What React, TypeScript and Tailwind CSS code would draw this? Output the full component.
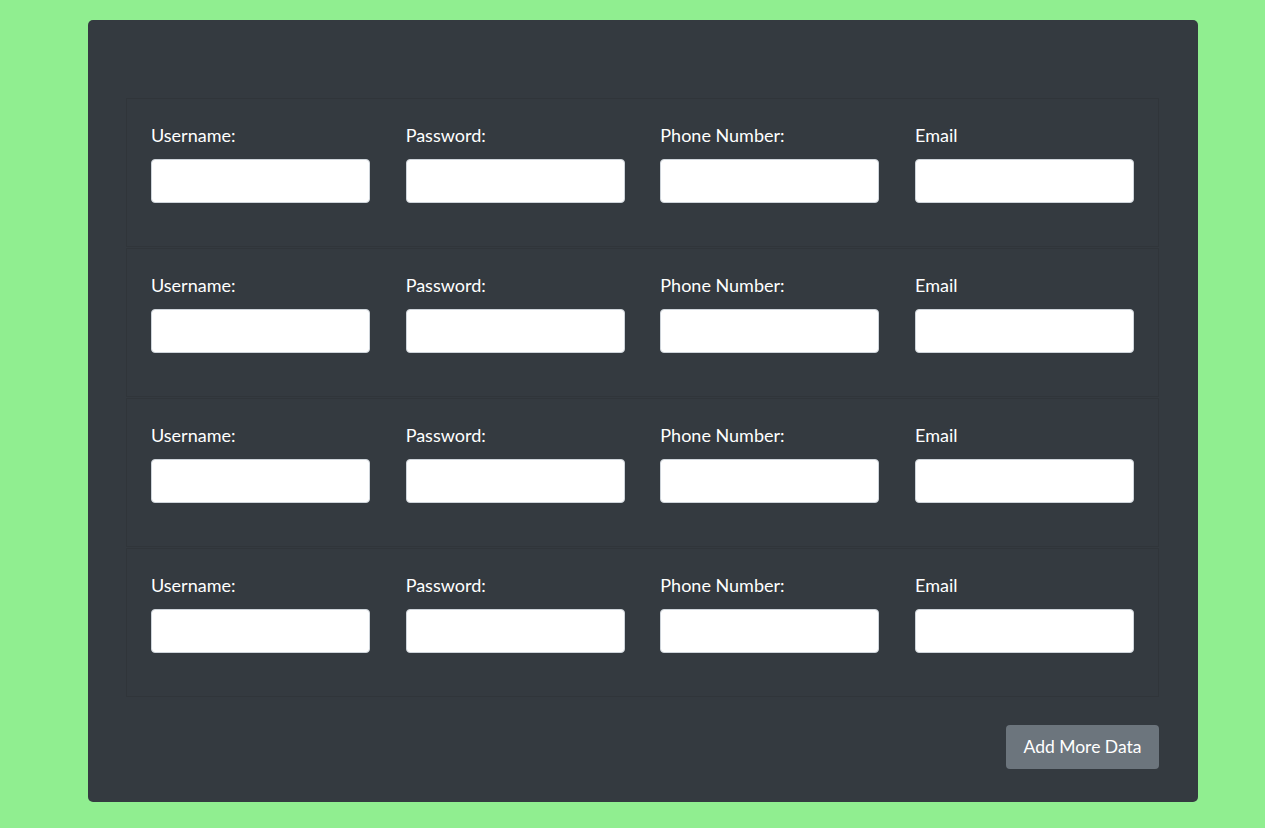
import React from "react";

const labels = ["Username:", "Password:", "Phone Number:", "Email"];

export default function App() {
  return (
    <div className="min-h-[828px] w-full bg-[#90ee90] pt-[20px]" style={{ fontFamily: "Lato, 'Noto Sans', sans-serif" }}>
      <div className="ml-[88px] flex h-[782px] w-[1110px] flex-col rounded-[5px] bg-[#343a40] pl-[38px] pr-[39px] pt-[78px]">
        <div className="flex flex-col gap-[1px]">
          {[0, 1, 2, 3].map((r) => (
            <div key={r} className="grid h-[149px] grid-cols-4 gap-x-[35.67px] border border-[#30353a] pl-[24px] pr-[24px] pt-[23px]">
              {labels.map((l) => (
                <div key={l} className="flex flex-col">
                  <label className="h-[26px] text-[18px] leading-[26px] text-white">{l}</label>
                  <input className="mt-[11px] h-[44px] w-full rounded-[4px] border border-[#ced4da] bg-white" />
                </div>
              ))}
            </div>
          ))}
        </div>
        <div className="mt-[28px] flex justify-end">
          <button className="h-[44px] w-[153px] rounded-[4px] bg-[#6c757d] pt-[1px] text-[17.5px] text-white">Add More Data</button>
        </div>
      </div>
    </div>
  );
}
